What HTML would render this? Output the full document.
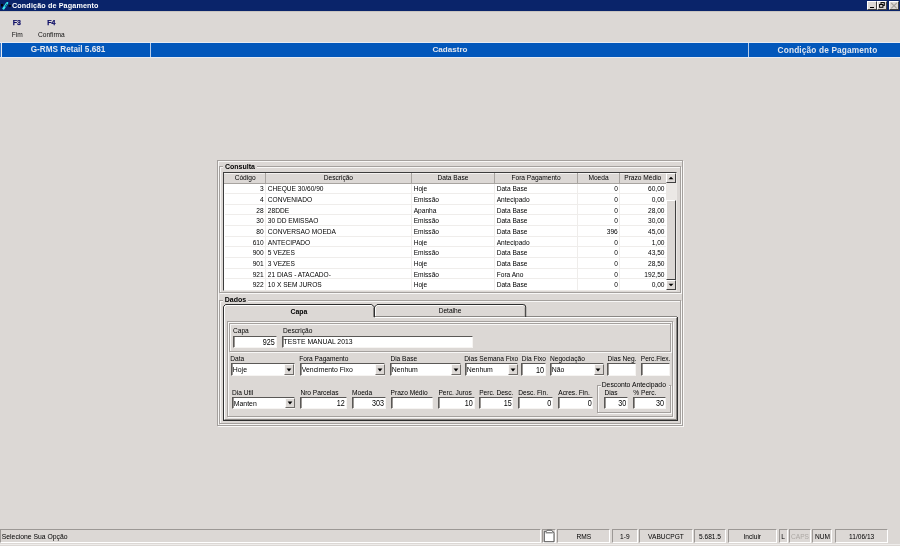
<!DOCTYPE html>
<html><head><meta charset="utf-8"><style>
html,body{margin:0;padding:0}
body{width:900px;height:546px;overflow:hidden;background:#dcd8d5;position:relative;font-family:'Liberation Sans', sans-serif}
#w{position:absolute;left:0;top:0;width:900px;height:546px;will-change:transform}
#w>div,#w>svg{position:absolute}
</style></head><body><div id="w">
<div style="left:0px;top:0px;width:900px;height:11px;background:#0a246a"></div>
<svg style="left:0px;top:0px" width="12" height="11" viewBox="0 0 12 11"><rect x="1" y="4" width="1.9" height="2.4" fill="#000"/><rect x="8.6" y="5.1" width="2.4" height="1.6" fill="#000"/><path d="M2.2 8.6 L6.2 2.6 Q7 1.6 8 2.1 Q8.6 2.6 8.1 3.5 L4.2 9.6 Q3 10.2 2.2 8.6 Z" fill="#34eaf4"/><path d="M4.6 6.6 L6.6 3.6 L7.4 4.1 L5.4 7.1 Z" fill="#0e5c70"/></svg>
<div style="left:12px;top:1.81px;font:bold 7.2px/7.2px 'Liberation Sans', sans-serif;color:#fff;white-space:nowrap;letter-spacing:0.13px">Condição de Pagamento</div>
<div style="left:867px;top:1px;width:10px;height:9px;background:#dcd8d5;border-top:1px solid #fff;border-left:1px solid #fff;border-bottom:1px solid #404040;border-right:1px solid #404040;box-sizing:border-box"></div>
<div style="left:877px;top:1px;width:10px;height:9px;background:#dcd8d5;border-top:1px solid #fff;border-left:1px solid #fff;border-bottom:1px solid #404040;border-right:1px solid #404040;box-sizing:border-box"></div>
<div style="left:889px;top:1px;width:9.5px;height:9px;background:#dcd8d5;border-top:1px solid #fff;border-left:1px solid #fff;border-bottom:1px solid #404040;border-right:1px solid #404040;box-sizing:border-box"></div>
<div style="left:870.3px;top:6.6px;width:3.8px;height:1.3px;background:#000"></div>
<svg style="left:879px;top:2.4px" width="6" height="6" viewBox="0 0 6 6"><rect x="2" y="0.6" width="3.3" height="2.8" fill="none" stroke="#000" stroke-width="1"/><rect x="0.6" y="2.5" width="3.3" height="2.8" fill="#dcd8d5" stroke="#000" stroke-width="1"/></svg>
<svg style="left:890px;top:2px" width="8" height="8" viewBox="0 0 8 8"><path d="M1.2 1 L6.8 6.4 M6.8 1 L1.2 6.4" stroke="#a6a29e" stroke-width="1.1"/></svg>
<div style="left:0px;top:11px;width:900px;height:1px;background:#c8c4c0"></div>
<div style="left:12.8px;top:19.27px;font:bold 7px/7px 'Liberation Sans', sans-serif;color:#101068;white-space:nowrap;-webkit-text-stroke:0.25px #101068">F3</div>
<div style="left:47.2px;top:19.27px;font:bold 7px/7px 'Liberation Sans', sans-serif;color:#101068;white-space:nowrap;-webkit-text-stroke:0.25px #101068">F4</div>
<div style="left:11.7px;top:31.61px;font:normal 6.6px/6.6px 'Liberation Sans', sans-serif;color:#111;white-space:nowrap;">Fim</div>
<div style="left:38px;top:31.61px;font:normal 6.6px/6.6px 'Liberation Sans', sans-serif;color:#111;white-space:nowrap;">Confirma</div>
<div style="left:0px;top:41.9px;width:900px;height:15.7px;background:#e6eaf2"></div>
<div style="left:1.6px;top:42.7px;width:898.4px;height:14.2px;background:#0257bb"></div>
<div style="left:149.7px;top:42.7px;width:0.8px;height:14.2px;background:#b8cce8"></div>
<div style="left:0px;top:42.7px;width:0.8px;height:14.2px;background:#3a78c8"></div>
<div style="left:747.9px;top:42.7px;width:0.8px;height:14.2px;background:#b8cce8"></div>
<div style="left:0px;top:46.36px;font:bold 8.2px/8.2px 'Liberation Sans', sans-serif;color:#e2e6ee;white-space:nowrap;width:136px;text-align:center;">G-RMS Retail 5.681</div>
<div style="left:150px;top:46.34px;font:bold 8.1px/8.1px 'Liberation Sans', sans-serif;color:#e2e6ee;white-space:nowrap;width:600px;text-align:center;">Cadastro</div>
<div style="left:748px;top:46.37px;font:bold 8.3px/8.3px 'Liberation Sans', sans-serif;color:#e2e6ee;white-space:nowrap;width:159px;text-align:center;letter-spacing:0.14px">Condição de Pagamento</div>
<div style="left:218px;top:161px;width:466px;height:266px;border:1px solid #f8f7f6;box-sizing:border-box"></div>
<div style="left:217px;top:160px;width:466px;height:266px;border:1px solid #a4a09d;box-sizing:border-box"></div>
<div style="left:220px;top:167px;width:462px;height:127px;border:1px solid #f8f7f6;box-sizing:border-box"></div>
<div style="left:219px;top:166px;width:462px;height:127px;border:1px solid #a4a09d;box-sizing:border-box"></div>
<div style="left:223px;top:164px;width:34px;height:5px;background:#dcd8d5"></div>
<div style="left:225px;top:163.07px;font:bold 7px/7px 'Liberation Sans', sans-serif;color:#000;white-space:nowrap;">Consulta</div>
<div style="left:223px;top:172px;width:454px;height:119px;background:#fff;border-top:1px solid #3c3c3c;border-left:1px solid #3c3c3c;border-bottom:1px solid #ece9e6;border-right:1px solid #ece9e6;box-sizing:border-box"></div>
<div style="left:224px;top:173px;width:442px;height:11px;background:#dcd8d5"></div>
<div style="left:224px;top:183px;width:442px;height:1px;background:#a8a4a0"></div>
<div style="left:224px;top:173px;width:442px;height:1px;background:#f4f2f0"></div>
<div style="left:225px;top:175.31px;font:normal 6.6px/6.6px 'Liberation Sans', sans-serif;color:#000;white-space:nowrap;width:40.30000000000001px;text-align:center;">Código</div>
<div style="left:264.8px;top:173px;width:1px;height:11px;background:#a8a4a0"></div>
<div style="left:265.3px;top:175.31px;font:normal 6.6px/6.6px 'Liberation Sans', sans-serif;color:#000;white-space:nowrap;width:146.2px;text-align:center;">Descrição</div>
<div style="left:411.0px;top:173px;width:1px;height:11px;background:#a8a4a0"></div>
<div style="left:411.5px;top:175.31px;font:normal 6.6px/6.6px 'Liberation Sans', sans-serif;color:#000;white-space:nowrap;width:83.0px;text-align:center;">Data Base</div>
<div style="left:494.0px;top:173px;width:1px;height:11px;background:#a8a4a0"></div>
<div style="left:494.5px;top:175.31px;font:normal 6.6px/6.6px 'Liberation Sans', sans-serif;color:#000;white-space:nowrap;width:83.0px;text-align:center;">Fora Pagamento</div>
<div style="left:577.0px;top:173px;width:1px;height:11px;background:#a8a4a0"></div>
<div style="left:577.5px;top:175.31px;font:normal 6.6px/6.6px 'Liberation Sans', sans-serif;color:#000;white-space:nowrap;width:42.10000000000002px;text-align:center;">Moeda</div>
<div style="left:619.1px;top:173px;width:1px;height:11px;background:#a8a4a0"></div>
<div style="left:619.6px;top:175.31px;font:normal 6.6px/6.6px 'Liberation Sans', sans-serif;color:#000;white-space:nowrap;width:46.39999999999998px;text-align:center;">Prazo Médio</div>
<div style="left:225px;top:186.31px;font:normal 6.6px/6.6px 'Liberation Sans', sans-serif;color:#000;white-space:nowrap;width:38.70000000000001px;text-align:right;">3</div>
<div style="left:267.8px;top:186.31px;font:normal 6.6px/6.6px 'Liberation Sans', sans-serif;color:#000;white-space:nowrap;">CHEQUE 30/60/90</div>
<div style="left:413.7px;top:186.31px;font:normal 6.6px/6.6px 'Liberation Sans', sans-serif;color:#000;white-space:nowrap;">Hoje</div>
<div style="left:496.7px;top:186.31px;font:normal 6.6px/6.6px 'Liberation Sans', sans-serif;color:#000;white-space:nowrap;">Data Base</div>
<div style="left:577.5px;top:186.31px;font:normal 6.6px/6.6px 'Liberation Sans', sans-serif;color:#000;white-space:nowrap;width:40.300000000000026px;text-align:right;">0</div>
<div style="left:619.6px;top:186.31px;font:normal 6.6px/6.6px 'Liberation Sans', sans-serif;color:#000;white-space:nowrap;width:44.89999999999998px;text-align:right;">60,00</div>
<div style="left:225px;top:192.9px;width:441px;height:0.8px;background:#efedeb"></div>
<div style="left:225px;top:196.98px;font:normal 6.6px/6.6px 'Liberation Sans', sans-serif;color:#000;white-space:nowrap;width:38.70000000000001px;text-align:right;">4</div>
<div style="left:267.8px;top:196.98px;font:normal 6.6px/6.6px 'Liberation Sans', sans-serif;color:#000;white-space:nowrap;">CONVENIADO</div>
<div style="left:413.7px;top:196.98px;font:normal 6.6px/6.6px 'Liberation Sans', sans-serif;color:#000;white-space:nowrap;">Emissão</div>
<div style="left:496.7px;top:196.98px;font:normal 6.6px/6.6px 'Liberation Sans', sans-serif;color:#000;white-space:nowrap;">Antecipado</div>
<div style="left:577.5px;top:196.98px;font:normal 6.6px/6.6px 'Liberation Sans', sans-serif;color:#000;white-space:nowrap;width:40.300000000000026px;text-align:right;">0</div>
<div style="left:619.6px;top:196.98px;font:normal 6.6px/6.6px 'Liberation Sans', sans-serif;color:#000;white-space:nowrap;width:44.89999999999998px;text-align:right;">0,00</div>
<div style="left:225px;top:203.57px;width:441px;height:0.8px;background:#efedeb"></div>
<div style="left:225px;top:207.65px;font:normal 6.6px/6.6px 'Liberation Sans', sans-serif;color:#000;white-space:nowrap;width:38.70000000000001px;text-align:right;">28</div>
<div style="left:267.8px;top:207.65px;font:normal 6.6px/6.6px 'Liberation Sans', sans-serif;color:#000;white-space:nowrap;">28DDE</div>
<div style="left:413.7px;top:207.65px;font:normal 6.6px/6.6px 'Liberation Sans', sans-serif;color:#000;white-space:nowrap;">Apanha</div>
<div style="left:496.7px;top:207.65px;font:normal 6.6px/6.6px 'Liberation Sans', sans-serif;color:#000;white-space:nowrap;">Data Base</div>
<div style="left:577.5px;top:207.65px;font:normal 6.6px/6.6px 'Liberation Sans', sans-serif;color:#000;white-space:nowrap;width:40.300000000000026px;text-align:right;">0</div>
<div style="left:619.6px;top:207.65px;font:normal 6.6px/6.6px 'Liberation Sans', sans-serif;color:#000;white-space:nowrap;width:44.89999999999998px;text-align:right;">28,00</div>
<div style="left:225px;top:214.24px;width:441px;height:0.8px;background:#efedeb"></div>
<div style="left:225px;top:218.32px;font:normal 6.6px/6.6px 'Liberation Sans', sans-serif;color:#000;white-space:nowrap;width:38.70000000000001px;text-align:right;">30</div>
<div style="left:267.8px;top:218.32px;font:normal 6.6px/6.6px 'Liberation Sans', sans-serif;color:#000;white-space:nowrap;">30 DD EMISSAO</div>
<div style="left:413.7px;top:218.32px;font:normal 6.6px/6.6px 'Liberation Sans', sans-serif;color:#000;white-space:nowrap;">Emissão</div>
<div style="left:496.7px;top:218.32px;font:normal 6.6px/6.6px 'Liberation Sans', sans-serif;color:#000;white-space:nowrap;">Data Base</div>
<div style="left:577.5px;top:218.32px;font:normal 6.6px/6.6px 'Liberation Sans', sans-serif;color:#000;white-space:nowrap;width:40.300000000000026px;text-align:right;">0</div>
<div style="left:619.6px;top:218.32px;font:normal 6.6px/6.6px 'Liberation Sans', sans-serif;color:#000;white-space:nowrap;width:44.89999999999998px;text-align:right;">30,00</div>
<div style="left:225px;top:224.91px;width:441px;height:0.8px;background:#efedeb"></div>
<div style="left:225px;top:228.99px;font:normal 6.6px/6.6px 'Liberation Sans', sans-serif;color:#000;white-space:nowrap;width:38.70000000000001px;text-align:right;">80</div>
<div style="left:267.8px;top:228.99px;font:normal 6.6px/6.6px 'Liberation Sans', sans-serif;color:#000;white-space:nowrap;">CONVERSAO MOEDA</div>
<div style="left:413.7px;top:228.99px;font:normal 6.6px/6.6px 'Liberation Sans', sans-serif;color:#000;white-space:nowrap;">Emissão</div>
<div style="left:496.7px;top:228.99px;font:normal 6.6px/6.6px 'Liberation Sans', sans-serif;color:#000;white-space:nowrap;">Data Base</div>
<div style="left:577.5px;top:228.99px;font:normal 6.6px/6.6px 'Liberation Sans', sans-serif;color:#000;white-space:nowrap;width:40.300000000000026px;text-align:right;">396</div>
<div style="left:619.6px;top:228.99px;font:normal 6.6px/6.6px 'Liberation Sans', sans-serif;color:#000;white-space:nowrap;width:44.89999999999998px;text-align:right;">45,00</div>
<div style="left:225px;top:235.58px;width:441px;height:0.8px;background:#efedeb"></div>
<div style="left:225px;top:239.66px;font:normal 6.6px/6.6px 'Liberation Sans', sans-serif;color:#000;white-space:nowrap;width:38.70000000000001px;text-align:right;">610</div>
<div style="left:267.8px;top:239.66px;font:normal 6.6px/6.6px 'Liberation Sans', sans-serif;color:#000;white-space:nowrap;">ANTECIPADO</div>
<div style="left:413.7px;top:239.66px;font:normal 6.6px/6.6px 'Liberation Sans', sans-serif;color:#000;white-space:nowrap;">Hoje</div>
<div style="left:496.7px;top:239.66px;font:normal 6.6px/6.6px 'Liberation Sans', sans-serif;color:#000;white-space:nowrap;">Antecipado</div>
<div style="left:577.5px;top:239.66px;font:normal 6.6px/6.6px 'Liberation Sans', sans-serif;color:#000;white-space:nowrap;width:40.300000000000026px;text-align:right;">0</div>
<div style="left:619.6px;top:239.66px;font:normal 6.6px/6.6px 'Liberation Sans', sans-serif;color:#000;white-space:nowrap;width:44.89999999999998px;text-align:right;">1,00</div>
<div style="left:225px;top:246.25px;width:441px;height:0.8px;background:#efedeb"></div>
<div style="left:225px;top:250.33px;font:normal 6.6px/6.6px 'Liberation Sans', sans-serif;color:#000;white-space:nowrap;width:38.70000000000001px;text-align:right;">900</div>
<div style="left:267.8px;top:250.33px;font:normal 6.6px/6.6px 'Liberation Sans', sans-serif;color:#000;white-space:nowrap;">5 VEZES</div>
<div style="left:413.7px;top:250.33px;font:normal 6.6px/6.6px 'Liberation Sans', sans-serif;color:#000;white-space:nowrap;">Emissão</div>
<div style="left:496.7px;top:250.33px;font:normal 6.6px/6.6px 'Liberation Sans', sans-serif;color:#000;white-space:nowrap;">Data Base</div>
<div style="left:577.5px;top:250.33px;font:normal 6.6px/6.6px 'Liberation Sans', sans-serif;color:#000;white-space:nowrap;width:40.300000000000026px;text-align:right;">0</div>
<div style="left:619.6px;top:250.33px;font:normal 6.6px/6.6px 'Liberation Sans', sans-serif;color:#000;white-space:nowrap;width:44.89999999999998px;text-align:right;">43,50</div>
<div style="left:225px;top:256.92px;width:441px;height:0.8px;background:#efedeb"></div>
<div style="left:225px;top:261.00px;font:normal 6.6px/6.6px 'Liberation Sans', sans-serif;color:#000;white-space:nowrap;width:38.70000000000001px;text-align:right;">901</div>
<div style="left:267.8px;top:261.00px;font:normal 6.6px/6.6px 'Liberation Sans', sans-serif;color:#000;white-space:nowrap;">3 VEZES</div>
<div style="left:413.7px;top:261.00px;font:normal 6.6px/6.6px 'Liberation Sans', sans-serif;color:#000;white-space:nowrap;">Hoje</div>
<div style="left:496.7px;top:261.00px;font:normal 6.6px/6.6px 'Liberation Sans', sans-serif;color:#000;white-space:nowrap;">Data Base</div>
<div style="left:577.5px;top:261.00px;font:normal 6.6px/6.6px 'Liberation Sans', sans-serif;color:#000;white-space:nowrap;width:40.300000000000026px;text-align:right;">0</div>
<div style="left:619.6px;top:261.00px;font:normal 6.6px/6.6px 'Liberation Sans', sans-serif;color:#000;white-space:nowrap;width:44.89999999999998px;text-align:right;">28,50</div>
<div style="left:225px;top:267.59000000000003px;width:441px;height:0.8px;background:#efedeb"></div>
<div style="left:225px;top:271.67px;font:normal 6.6px/6.6px 'Liberation Sans', sans-serif;color:#000;white-space:nowrap;width:38.70000000000001px;text-align:right;">921</div>
<div style="left:267.8px;top:271.67px;font:normal 6.6px/6.6px 'Liberation Sans', sans-serif;color:#000;white-space:nowrap;">21 DIAS - ATACADO-</div>
<div style="left:413.7px;top:271.67px;font:normal 6.6px/6.6px 'Liberation Sans', sans-serif;color:#000;white-space:nowrap;">Emissão</div>
<div style="left:496.7px;top:271.67px;font:normal 6.6px/6.6px 'Liberation Sans', sans-serif;color:#000;white-space:nowrap;">Fora Ano</div>
<div style="left:577.5px;top:271.67px;font:normal 6.6px/6.6px 'Liberation Sans', sans-serif;color:#000;white-space:nowrap;width:40.300000000000026px;text-align:right;">0</div>
<div style="left:619.6px;top:271.67px;font:normal 6.6px/6.6px 'Liberation Sans', sans-serif;color:#000;white-space:nowrap;width:44.89999999999998px;text-align:right;">192,50</div>
<div style="left:225px;top:278.26px;width:441px;height:0.8px;background:#efedeb"></div>
<div style="left:225px;top:282.34px;font:normal 6.6px/6.6px 'Liberation Sans', sans-serif;color:#000;white-space:nowrap;width:38.70000000000001px;text-align:right;">922</div>
<div style="left:267.8px;top:282.34px;font:normal 6.6px/6.6px 'Liberation Sans', sans-serif;color:#000;white-space:nowrap;">10 X SEM JUROS</div>
<div style="left:413.7px;top:282.34px;font:normal 6.6px/6.6px 'Liberation Sans', sans-serif;color:#000;white-space:nowrap;">Hoje</div>
<div style="left:496.7px;top:282.34px;font:normal 6.6px/6.6px 'Liberation Sans', sans-serif;color:#000;white-space:nowrap;">Data Base</div>
<div style="left:577.5px;top:282.34px;font:normal 6.6px/6.6px 'Liberation Sans', sans-serif;color:#000;white-space:nowrap;width:40.300000000000026px;text-align:right;">0</div>
<div style="left:619.6px;top:282.34px;font:normal 6.6px/6.6px 'Liberation Sans', sans-serif;color:#000;white-space:nowrap;width:44.89999999999998px;text-align:right;">0,00</div>
<div style="left:264.8px;top:184px;width:1px;height:106px;background:#efedeb"></div>
<div style="left:411.0px;top:184px;width:1px;height:106px;background:#efedeb"></div>
<div style="left:494.0px;top:184px;width:1px;height:106px;background:#efedeb"></div>
<div style="left:577.0px;top:184px;width:1px;height:106px;background:#efedeb"></div>
<div style="left:619.1px;top:184px;width:1px;height:106px;background:#efedeb"></div>
<div style="left:666px;top:173px;width:10px;height:117px;background:#ebe8e5"></div>
<div style="left:666px;top:173px;width:10px;height:10px;background:#dcd8d5;border-top:1px solid #fff;border-left:1px solid #fff;border-bottom:1px solid #404040;border-right:1px solid #404040;box-sizing:border-box"></div>
<svg style="left:666.70px;top:174.00px" width="8" height="8" viewBox="0 0 8 8"><path d="M1.50 5.30 L6.50 5.30 L4 2.70 Z" fill="#000"/></svg>
<div style="left:666px;top:200px;width:10px;height:80px;background:#dcd8d5;border-top:1px solid #fff;border-left:1px solid #fff;border-bottom:1px solid #404040;border-right:1px solid #404040;box-sizing:border-box"></div>
<div style="left:666px;top:280px;width:10px;height:10px;background:#dcd8d5;border-top:1px solid #fff;border-left:1px solid #fff;border-bottom:1px solid #404040;border-right:1px solid #404040;box-sizing:border-box"></div>
<svg style="left:666.70px;top:280.80px" width="8" height="8" viewBox="0 0 8 8"><path d="M1.50 2.70 L6.50 2.70 L4 5.30 Z" fill="#000"/></svg>
<div style="left:220px;top:301px;width:462px;height:124px;border:1px solid #f8f7f6;box-sizing:border-box"></div>
<div style="left:219px;top:300px;width:462px;height:124px;border:1px solid #a4a09d;box-sizing:border-box"></div>
<div style="left:223px;top:295px;width:25px;height:9px;background:#dcd8d5"></div>
<div style="left:224.8px;top:296.37px;font:bold 7px/7px 'Liberation Sans', sans-serif;color:#000;white-space:nowrap;">Dados</div>
<div style="left:223px;top:420px;width:455px;height:1px;background:#2e2e2e"></div>
<div style="left:224px;top:419px;width:453px;height:1px;background:#8a8784"></div>
<div style="left:677px;top:317px;width:1px;height:104px;background:#2e2e2e"></div>
<div style="left:676px;top:318px;width:1px;height:102px;background:#8a8784"></div>
<svg style="left:220px;top:300px" width="460" height="122" viewBox="0 0 460 122" fill="none"><path d="M155 17.5 L456 17.5" stroke="#fff" stroke-width="1"/><path d="M154.5 16.5 L457 16.5" stroke="#8a8784" stroke-width="1"/><path d="M4.5 119.5 L4.5 7 L6.5 5.5 L151.5 5.5" stroke="#fff" stroke-width="1"/><path d="M155.5 16 L155.5 7.5 L157.5 5.5 L303 5.5" stroke="#fbfaf9" stroke-width="1"/><path d="M153.5 7.5 L153.5 17" stroke="#8a8784" stroke-width="1"/><path d="M304.7 7.5 L304.7 16" stroke="#b0aca8" stroke-width="0.8"/><path d="M3.5 120.5 L3.5 6.5 L5.5 4.5 L151.7 4.5 L154.5 7 L154.5 17.2" stroke="#2e2e2e" stroke-width="1"/><path d="M154.5 7 L157 4.5 L303.2 4.5 Q305.7 4.5 305.7 7 L305.7 17" stroke="#2e2e2e" stroke-width="1"/></svg>
<div style="left:374px;top:308.01px;font:normal 6.6px/6.6px 'Liberation Sans', sans-serif;color:#000;white-space:nowrap;width:152px;text-align:center;">Detalhe</div>
<div style="left:223px;top:308.86px;font:bold 6.9px/6.9px 'Liberation Sans', sans-serif;color:#000;white-space:nowrap;width:152px;text-align:center;">Capa</div>
<div style="left:228px;top:322px;width:446px;height:96px;border:1px solid #f8f7f6;box-sizing:border-box"></div>
<div style="left:227px;top:321px;width:446px;height:96px;border:1px solid #a4a09d;box-sizing:border-box"></div>
<div style="left:230px;top:324px;width:442px;height:29px;border:1px solid #f8f7f6;box-sizing:border-box"></div>
<div style="left:229px;top:323px;width:442px;height:29px;border:1px solid #a4a09d;box-sizing:border-box"></div>
<div style="left:233px;top:328.21px;font:normal 6.6px/6.6px 'Liberation Sans', sans-serif;color:#000;white-space:nowrap;">Capa</div>
<div style="left:233px;top:335.5px;width:43.5px;height:12.300000000000011px;background:#fff;border-top:1px solid #5a5856;border-left:1px solid #5a5856;border-bottom:1px solid #f6f4f2;border-right:1px solid #f6f4f2;box-sizing:border-box"></div>
<div style="left:234px;top:336.5px;width:0.6px;height:10.300000000000011px;background:#9a9794"></div>
<div style="left:233px;top:338.51px;font:normal 7.2px/7.2px 'Liberation Sans', sans-serif;color:#000;white-space:nowrap;width:41.7px;text-align:right;transform:scaleY(1.17);transform-origin:0 84.6%">925</div>
<div style="left:283px;top:328.21px;font:normal 6.6px/6.6px 'Liberation Sans', sans-serif;color:#000;white-space:nowrap;">Descrição</div>
<div style="left:282.2px;top:335.5px;width:190.8px;height:12.300000000000011px;background:#fff;border-top:1px solid #5a5856;border-left:1px solid #5a5856;border-bottom:1px solid #f6f4f2;border-right:1px solid #f6f4f2;box-sizing:border-box"></div>
<div style="left:283.2px;top:336.5px;width:0.6px;height:10.300000000000011px;background:#9a9794"></div>
<div style="left:283.6px;top:339.24px;font:normal 6.8px/6.8px 'Liberation Sans', sans-serif;color:#000;white-space:nowrap;transform:scaleY(1.08);transform-origin:0 84.6%">TESTE MANUAL 2013</div>
<div style="left:230.3px;top:355.71px;font:normal 6.6px/6.6px 'Liberation Sans', sans-serif;color:#000;white-space:nowrap;">Data</div>
<div style="left:231px;top:363px;width:63.60000000000002px;height:13px;background:#fff;border-top:1px solid #5a5856;border-left:1px solid #5a5856;border-bottom:1px solid #f6f4f2;border-right:1px solid #f6f4f2;box-sizing:border-box"></div>
<div style="left:232px;top:364px;width:0.6px;height:11px;background:#9a9794"></div>
<div style="left:284.3px;top:364px;width:10px;height:11px;background:#dcd8d5;border-top:1px solid #fbfaf9;border-left:1px solid #fbfaf9;border-bottom:1px solid #6e6b68;border-right:1px solid #6e6b68;box-sizing:border-box"></div>
<svg style="left:284.90px;top:365.60px" width="8" height="8" viewBox="0 0 8 8"><path d="M1.60 2.55 L6.40 2.55 L4 5.45 Z" fill="#000"/></svg>
<div style="left:232.8px;top:367.16px;font:normal 6.9px/6.9px 'Liberation Sans', sans-serif;color:#000;white-space:nowrap;transform:scaleY(1.06);transform-origin:0 84.6%">Hoje</div>
<div style="left:299.2px;top:355.71px;font:normal 6.6px/6.6px 'Liberation Sans', sans-serif;color:#000;white-space:nowrap;">Fora Pagamento</div>
<div style="left:299.6px;top:363px;width:85.60000000000002px;height:13px;background:#fff;border-top:1px solid #5a5856;border-left:1px solid #5a5856;border-bottom:1px solid #f6f4f2;border-right:1px solid #f6f4f2;box-sizing:border-box"></div>
<div style="left:300.6px;top:364px;width:0.6px;height:11px;background:#9a9794"></div>
<div style="left:374.90000000000003px;top:364px;width:10px;height:11px;background:#dcd8d5;border-top:1px solid #fbfaf9;border-left:1px solid #fbfaf9;border-bottom:1px solid #6e6b68;border-right:1px solid #6e6b68;box-sizing:border-box"></div>
<svg style="left:375.50px;top:365.60px" width="8" height="8" viewBox="0 0 8 8"><path d="M1.60 2.55 L6.40 2.55 L4 5.45 Z" fill="#000"/></svg>
<div style="left:301.8px;top:367.16px;font:normal 6.9px/6.9px 'Liberation Sans', sans-serif;color:#000;white-space:nowrap;transform:scaleY(1.06);transform-origin:0 84.6%">Vencimento Fixo</div>
<div style="left:390.4px;top:355.71px;font:normal 6.6px/6.6px 'Liberation Sans', sans-serif;color:#000;white-space:nowrap;">Dia Base</div>
<div style="left:390.4px;top:363px;width:70.80000000000007px;height:13px;background:#fff;border-top:1px solid #5a5856;border-left:1px solid #5a5856;border-bottom:1px solid #f6f4f2;border-right:1px solid #f6f4f2;box-sizing:border-box"></div>
<div style="left:391.4px;top:364px;width:0.6px;height:11px;background:#9a9794"></div>
<div style="left:450.90000000000003px;top:364px;width:10px;height:11px;background:#dcd8d5;border-top:1px solid #fbfaf9;border-left:1px solid #fbfaf9;border-bottom:1px solid #6e6b68;border-right:1px solid #6e6b68;box-sizing:border-box"></div>
<svg style="left:451.50px;top:365.60px" width="8" height="8" viewBox="0 0 8 8"><path d="M1.60 2.55 L6.40 2.55 L4 5.45 Z" fill="#000"/></svg>
<div style="left:391.8px;top:367.16px;font:normal 6.9px/6.9px 'Liberation Sans', sans-serif;color:#000;white-space:nowrap;transform:scaleY(1.06);transform-origin:0 84.6%">Nenhum</div>
<div style="left:464.3px;top:355.71px;font:normal 6.6px/6.6px 'Liberation Sans', sans-serif;color:#000;white-space:nowrap;">Dias Semana Fixo</div>
<div style="left:465px;top:363px;width:53.39999999999998px;height:13px;background:#fff;border-top:1px solid #5a5856;border-left:1px solid #5a5856;border-bottom:1px solid #f6f4f2;border-right:1px solid #f6f4f2;box-sizing:border-box"></div>
<div style="left:466px;top:364px;width:0.6px;height:11px;background:#9a9794"></div>
<div style="left:508.09999999999997px;top:364px;width:10px;height:11px;background:#dcd8d5;border-top:1px solid #fbfaf9;border-left:1px solid #fbfaf9;border-bottom:1px solid #6e6b68;border-right:1px solid #6e6b68;box-sizing:border-box"></div>
<svg style="left:508.70px;top:365.60px" width="8" height="8" viewBox="0 0 8 8"><path d="M1.60 2.55 L6.40 2.55 L4 5.45 Z" fill="#000"/></svg>
<div style="left:466.8px;top:367.16px;font:normal 6.9px/6.9px 'Liberation Sans', sans-serif;color:#000;white-space:nowrap;transform:scaleY(1.06);transform-origin:0 84.6%">Nenhum</div>
<div style="left:521.8px;top:355.71px;font:normal 6.6px/6.6px 'Liberation Sans', sans-serif;color:#000;white-space:nowrap;">Dia Fixo</div>
<div style="left:521.3px;top:363px;width:24.5px;height:13px;background:#fff;border-top:1px solid #5a5856;border-left:1px solid #5a5856;border-bottom:1px solid #f6f4f2;border-right:1px solid #f6f4f2;box-sizing:border-box"></div>
<div style="left:522.3px;top:364px;width:0.6px;height:11px;background:#9a9794"></div>
<div style="left:521.3px;top:366.91px;font:normal 7.2px/7.2px 'Liberation Sans', sans-serif;color:#000;white-space:nowrap;width:22.7px;text-align:right;transform:scaleY(1.17);transform-origin:0 84.6%">10</div>
<div style="left:550px;top:355.71px;font:normal 6.6px/6.6px 'Liberation Sans', sans-serif;color:#000;white-space:nowrap;">Negociação</div>
<div style="left:550px;top:363px;width:53.89999999999998px;height:13px;background:#fff;border-top:1px solid #5a5856;border-left:1px solid #5a5856;border-bottom:1px solid #f6f4f2;border-right:1px solid #f6f4f2;box-sizing:border-box"></div>
<div style="left:551px;top:364px;width:0.6px;height:11px;background:#9a9794"></div>
<div style="left:593.6px;top:364px;width:10px;height:11px;background:#dcd8d5;border-top:1px solid #fbfaf9;border-left:1px solid #fbfaf9;border-bottom:1px solid #6e6b68;border-right:1px solid #6e6b68;box-sizing:border-box"></div>
<svg style="left:594.20px;top:365.60px" width="8" height="8" viewBox="0 0 8 8"><path d="M1.60 2.55 L6.40 2.55 L4 5.45 Z" fill="#000"/></svg>
<div style="left:551.8px;top:367.16px;font:normal 6.9px/6.9px 'Liberation Sans', sans-serif;color:#000;white-space:nowrap;transform:scaleY(1.06);transform-origin:0 84.6%">Não</div>
<div style="left:607.5px;top:355.71px;font:normal 6.6px/6.6px 'Liberation Sans', sans-serif;color:#000;white-space:nowrap;">Dias Neg.</div>
<div style="left:607px;top:363px;width:29px;height:13px;background:#fff;border-top:1px solid #5a5856;border-left:1px solid #5a5856;border-bottom:1px solid #f6f4f2;border-right:1px solid #f6f4f2;box-sizing:border-box"></div>
<div style="left:608px;top:364px;width:0.6px;height:11px;background:#9a9794"></div>
<div style="left:640.8px;top:355.71px;font:normal 6.6px/6.6px 'Liberation Sans', sans-serif;color:#000;white-space:nowrap;">Perc.Flex.</div>
<div style="left:641.3px;top:363px;width:28.700000000000045px;height:13px;background:#fff;border-top:1px solid #5a5856;border-left:1px solid #5a5856;border-bottom:1px solid #f6f4f2;border-right:1px solid #f6f4f2;box-sizing:border-box"></div>
<div style="left:642.3px;top:364px;width:0.6px;height:11px;background:#9a9794"></div>
<div style="left:232px;top:389.51px;font:normal 6.6px/6.6px 'Liberation Sans', sans-serif;color:#000;white-space:nowrap;">Dia Util</div>
<div style="left:232.2px;top:397px;width:63.200000000000045px;height:12.199999999999989px;background:#fff;border-top:1px solid #5a5856;border-left:1px solid #5a5856;border-bottom:1px solid #f6f4f2;border-right:1px solid #f6f4f2;box-sizing:border-box"></div>
<div style="left:233.2px;top:398px;width:0.6px;height:10.199999999999989px;background:#9a9794"></div>
<div style="left:285.1px;top:398px;width:10px;height:10.199999999999989px;background:#dcd8d5;border-top:1px solid #fbfaf9;border-left:1px solid #fbfaf9;border-bottom:1px solid #6e6b68;border-right:1px solid #6e6b68;box-sizing:border-box"></div>
<svg style="left:285.70px;top:399.20px" width="8" height="8" viewBox="0 0 8 8"><path d="M1.60 2.55 L6.40 2.55 L4 5.45 Z" fill="#000"/></svg>
<div style="left:233.8px;top:400.66px;font:normal 6.9px/6.9px 'Liberation Sans', sans-serif;color:#000;white-space:nowrap;transform:scaleY(1.06);transform-origin:0 84.6%">Manten</div>
<div style="left:300.4px;top:389.51px;font:normal 6.6px/6.6px 'Liberation Sans', sans-serif;color:#000;white-space:nowrap;">Nro Parcelas</div>
<div style="left:300.4px;top:397px;width:46.200000000000045px;height:12.199999999999989px;background:#fff;border-top:1px solid #5a5856;border-left:1px solid #5a5856;border-bottom:1px solid #f6f4f2;border-right:1px solid #f6f4f2;box-sizing:border-box"></div>
<div style="left:301.4px;top:398px;width:0.6px;height:10.199999999999989px;background:#9a9794"></div>
<div style="left:300.4px;top:400.41px;font:normal 7.2px/7.2px 'Liberation Sans', sans-serif;color:#000;white-space:nowrap;width:44.40000000000005px;text-align:right;transform:scaleY(1.17);transform-origin:0 84.6%">12</div>
<div style="left:352px;top:389.51px;font:normal 6.6px/6.6px 'Liberation Sans', sans-serif;color:#000;white-space:nowrap;">Moeda</div>
<div style="left:352px;top:397px;width:33.69999999999999px;height:12.199999999999989px;background:#fff;border-top:1px solid #5a5856;border-left:1px solid #5a5856;border-bottom:1px solid #f6f4f2;border-right:1px solid #f6f4f2;box-sizing:border-box"></div>
<div style="left:353px;top:398px;width:0.6px;height:10.199999999999989px;background:#9a9794"></div>
<div style="left:352px;top:400.41px;font:normal 7.2px/7.2px 'Liberation Sans', sans-serif;color:#000;white-space:nowrap;width:31.899999999999988px;text-align:right;transform:scaleY(1.17);transform-origin:0 84.6%">303</div>
<div style="left:390.6px;top:389.51px;font:normal 6.6px/6.6px 'Liberation Sans', sans-serif;color:#000;white-space:nowrap;">Prazo Médio</div>
<div style="left:390.6px;top:397px;width:42.89999999999998px;height:12.199999999999989px;background:#fff;border-top:1px solid #5a5856;border-left:1px solid #5a5856;border-bottom:1px solid #f6f4f2;border-right:1px solid #f6f4f2;box-sizing:border-box"></div>
<div style="left:391.6px;top:398px;width:0.6px;height:10.199999999999989px;background:#9a9794"></div>
<div style="left:438.4px;top:389.51px;font:normal 6.6px/6.6px 'Liberation Sans', sans-serif;color:#000;white-space:nowrap;">Perc. Juros</div>
<div style="left:437.8px;top:397px;width:36.80000000000001px;height:12.199999999999989px;background:#fff;border-top:1px solid #5a5856;border-left:1px solid #5a5856;border-bottom:1px solid #f6f4f2;border-right:1px solid #f6f4f2;box-sizing:border-box"></div>
<div style="left:438.8px;top:398px;width:0.6px;height:10.199999999999989px;background:#9a9794"></div>
<div style="left:437.8px;top:400.41px;font:normal 7.2px/7.2px 'Liberation Sans', sans-serif;color:#000;white-space:nowrap;width:35.000000000000014px;text-align:right;transform:scaleY(1.17);transform-origin:0 84.6%">10</div>
<div style="left:479.2px;top:389.51px;font:normal 6.6px/6.6px 'Liberation Sans', sans-serif;color:#000;white-space:nowrap;">Perc. Desc.</div>
<div style="left:479.4px;top:397px;width:34.10000000000002px;height:12.199999999999989px;background:#fff;border-top:1px solid #5a5856;border-left:1px solid #5a5856;border-bottom:1px solid #f6f4f2;border-right:1px solid #f6f4f2;box-sizing:border-box"></div>
<div style="left:480.4px;top:398px;width:0.6px;height:10.199999999999989px;background:#9a9794"></div>
<div style="left:479.4px;top:400.41px;font:normal 7.2px/7.2px 'Liberation Sans', sans-serif;color:#000;white-space:nowrap;width:32.300000000000026px;text-align:right;transform:scaleY(1.17);transform-origin:0 84.6%">15</div>
<div style="left:518.3px;top:389.51px;font:normal 6.6px/6.6px 'Liberation Sans', sans-serif;color:#000;white-space:nowrap;">Desc. Fin.</div>
<div style="left:518.3px;top:397px;width:34.700000000000045px;height:12.199999999999989px;background:#fff;border-top:1px solid #5a5856;border-left:1px solid #5a5856;border-bottom:1px solid #f6f4f2;border-right:1px solid #f6f4f2;box-sizing:border-box"></div>
<div style="left:519.3px;top:398px;width:0.6px;height:10.199999999999989px;background:#9a9794"></div>
<div style="left:518.3px;top:400.41px;font:normal 7.2px/7.2px 'Liberation Sans', sans-serif;color:#000;white-space:nowrap;width:32.90000000000005px;text-align:right;transform:scaleY(1.17);transform-origin:0 84.6%">0</div>
<div style="left:558.3px;top:389.51px;font:normal 6.6px/6.6px 'Liberation Sans', sans-serif;color:#000;white-space:nowrap;">Acres. Fin.</div>
<div style="left:558.3px;top:397px;width:35.200000000000045px;height:12.199999999999989px;background:#fff;border-top:1px solid #5a5856;border-left:1px solid #5a5856;border-bottom:1px solid #f6f4f2;border-right:1px solid #f6f4f2;box-sizing:border-box"></div>
<div style="left:559.3px;top:398px;width:0.6px;height:10.199999999999989px;background:#9a9794"></div>
<div style="left:558.3px;top:400.41px;font:normal 7.2px/7.2px 'Liberation Sans', sans-serif;color:#000;white-space:nowrap;width:33.40000000000005px;text-align:right;transform:scaleY(1.17);transform-origin:0 84.6%">0</div>
<div style="left:598px;top:386px;width:74px;height:28px;border:1px solid #f8f7f6;box-sizing:border-box"></div>
<div style="left:597px;top:385px;width:74px;height:28px;border:1px solid #a4a09d;box-sizing:border-box"></div>
<div style="left:600.5px;top:380px;width:68px;height:7px;background:#dcd8d5"></div>
<div style="left:601.7px;top:381.94px;font:normal 6.8px/6.8px 'Liberation Sans', sans-serif;color:#000;white-space:nowrap;">Desconto Antecipado</div>
<div style="left:604.4px;top:389.51px;font:normal 6.6px/6.6px 'Liberation Sans', sans-serif;color:#000;white-space:nowrap;">Dias</div>
<div style="left:604.4px;top:397px;width:23.600000000000023px;height:12.199999999999989px;background:#fff;border-top:1px solid #5a5856;border-left:1px solid #5a5856;border-bottom:1px solid #f6f4f2;border-right:1px solid #f6f4f2;box-sizing:border-box"></div>
<div style="left:605.4px;top:398px;width:0.6px;height:10.199999999999989px;background:#9a9794"></div>
<div style="left:604.4px;top:400.41px;font:normal 7.2px/7.2px 'Liberation Sans', sans-serif;color:#000;white-space:nowrap;width:21.800000000000022px;text-align:right;transform:scaleY(1.17);transform-origin:0 84.6%">30</div>
<div style="left:633.3px;top:389.51px;font:normal 6.6px/6.6px 'Liberation Sans', sans-serif;color:#000;white-space:nowrap;">% Perc.</div>
<div style="left:633.3px;top:397px;width:32.5px;height:12.199999999999989px;background:#fff;border-top:1px solid #5a5856;border-left:1px solid #5a5856;border-bottom:1px solid #f6f4f2;border-right:1px solid #f6f4f2;box-sizing:border-box"></div>
<div style="left:634.3px;top:398px;width:0.6px;height:10.199999999999989px;background:#9a9794"></div>
<div style="left:633.3px;top:400.41px;font:normal 7.2px/7.2px 'Liberation Sans', sans-serif;color:#000;white-space:nowrap;width:30.7px;text-align:right;transform:scaleY(1.17);transform-origin:0 84.6%">30</div>
<div style="left:0px;top:543.6px;width:900px;height:1.2px;background:#eeecea"></div>
<div style="left:0px;top:528.7px;width:540.6px;height:14.299999999999955px;border-top:1px solid #9c9895;border-left:1px solid #9c9895;border-bottom:1px solid #fff;border-right:1px solid #fff;box-sizing:border-box"></div>
<div style="left:1.8px;top:533.64px;font:normal 6.8px/6.8px 'Liberation Sans', sans-serif;color:#000;white-space:nowrap;">Selecione Sua Opção</div>
<div style="left:541.6px;top:528.7px;width:14.799999999999955px;height:14.299999999999955px;border-top:1px solid #9c9895;border-left:1px solid #9c9895;border-bottom:1px solid #fff;border-right:1px solid #fff;box-sizing:border-box"></div>
<svg style="left:543px;top:529px" width="13" height="14" viewBox="0 0 13 14"><path d="M1.3 2.3 L3.6 2.3 L4.2 1.2 L8.6 1.2 L9.3 2.3 Q11 2.6 11 4.2 L11 12.7 L1.3 12.7 Z" fill="#fff" stroke="#555" stroke-width="1"/><path d="M2.6 3.8 L9.8 3.8" stroke="#666" stroke-width="1.1"/></svg>
<div style="left:557.4px;top:528.7px;width:52.80000000000007px;height:14.299999999999955px;border-top:1px solid #9c9895;border-left:1px solid #9c9895;border-bottom:1px solid #fff;border-right:1px solid #fff;box-sizing:border-box"></div>
<div style="left:557.4px;top:533.91px;font:normal 6.6px/6.6px 'Liberation Sans', sans-serif;color:#000;white-space:nowrap;width:52.80000000000007px;text-align:center;">RMS</div>
<div style="left:611.9px;top:528.7px;width:25.800000000000068px;height:14.299999999999955px;border-top:1px solid #9c9895;border-left:1px solid #9c9895;border-bottom:1px solid #fff;border-right:1px solid #fff;box-sizing:border-box"></div>
<div style="left:611.9px;top:533.91px;font:normal 6.6px/6.6px 'Liberation Sans', sans-serif;color:#000;white-space:nowrap;width:25.800000000000068px;text-align:center;">1-9</div>
<div style="left:639.4px;top:528.7px;width:53.200000000000045px;height:14.299999999999955px;border-top:1px solid #9c9895;border-left:1px solid #9c9895;border-bottom:1px solid #fff;border-right:1px solid #fff;box-sizing:border-box"></div>
<div style="left:639.4px;top:533.91px;font:normal 6.6px/6.6px 'Liberation Sans', sans-serif;color:#000;white-space:nowrap;width:53.200000000000045px;text-align:center;">VABUCPGT</div>
<div style="left:694.2px;top:528.7px;width:31.59999999999991px;height:14.299999999999955px;border-top:1px solid #9c9895;border-left:1px solid #9c9895;border-bottom:1px solid #fff;border-right:1px solid #fff;box-sizing:border-box"></div>
<div style="left:694.2px;top:533.91px;font:normal 6.6px/6.6px 'Liberation Sans', sans-serif;color:#000;white-space:nowrap;width:31.59999999999991px;text-align:center;">5.681.5</div>
<div style="left:728px;top:528.7px;width:48.5px;height:14.299999999999955px;border-top:1px solid #9c9895;border-left:1px solid #9c9895;border-bottom:1px solid #fff;border-right:1px solid #fff;box-sizing:border-box"></div>
<div style="left:728px;top:533.91px;font:normal 6.6px/6.6px 'Liberation Sans', sans-serif;color:#000;white-space:nowrap;width:48.5px;text-align:center;">Incluir</div>
<div style="left:778.6px;top:528.7px;width:9.100000000000023px;height:14.299999999999955px;border-top:1px solid #9c9895;border-left:1px solid #9c9895;border-bottom:1px solid #fff;border-right:1px solid #fff;box-sizing:border-box"></div>
<div style="left:778.6px;top:533.91px;font:normal 6.6px/6.6px 'Liberation Sans', sans-serif;color:#000;white-space:nowrap;width:9.100000000000023px;text-align:center;">L</div>
<div style="left:789.2px;top:528.7px;width:21.699999999999932px;height:14.299999999999955px;border-top:1px solid #9c9895;border-left:1px solid #9c9895;border-bottom:1px solid #fff;border-right:1px solid #fff;box-sizing:border-box"></div>
<div style="left:789.2px;top:533.91px;font:normal 6.6px/6.6px 'Liberation Sans', sans-serif;color:#aca8a4;white-space:nowrap;width:21.699999999999932px;text-align:center;">CAPS</div>
<div style="left:812.4px;top:528.7px;width:20.0px;height:14.299999999999955px;border-top:1px solid #9c9895;border-left:1px solid #9c9895;border-bottom:1px solid #fff;border-right:1px solid #fff;box-sizing:border-box"></div>
<div style="left:812.4px;top:533.91px;font:normal 6.6px/6.6px 'Liberation Sans', sans-serif;color:#000;white-space:nowrap;width:20.0px;text-align:center;">NUM</div>
<div style="left:835px;top:528.7px;width:53.39999999999998px;height:14.299999999999955px;border-top:1px solid #9c9895;border-left:1px solid #9c9895;border-bottom:1px solid #fff;border-right:1px solid #fff;box-sizing:border-box"></div>
<div style="left:835px;top:533.91px;font:normal 6.6px/6.6px 'Liberation Sans', sans-serif;color:#000;white-space:nowrap;width:53.39999999999998px;text-align:center;">11/06/13</div>
</div></body></html>
